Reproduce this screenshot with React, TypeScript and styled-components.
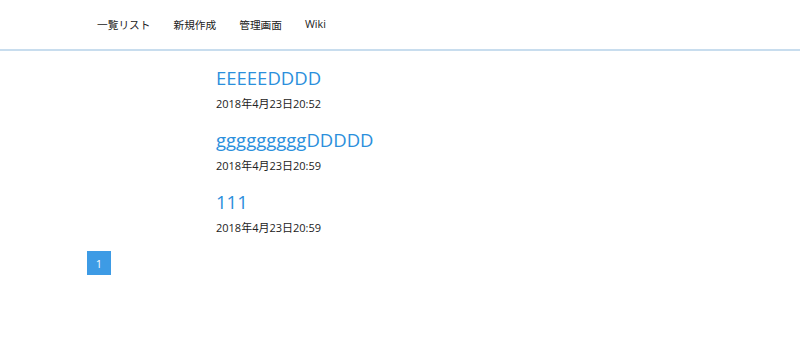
import React from "react";
import styled, { createGlobalStyle } from "styled-components";

const Global = createGlobalStyle`
  html, body { margin: 0; padding: 0; background: #fff; }
  body { font-family: "Open Sans", "Noto Sans CJK JP", sans-serif; color: #222; }
`;

const Header = styled.header`
  height: 49px;
  border-bottom: 2px solid #c8ddee;
  display: flex;
  align-items: center;
  padding-left: 97px;
`;

const Nav = styled.nav`
  display: flex;
  gap: 23px;
`;

const NavLink = styled.a`
  font-size: 10.7px;
  color: #222;
  text-decoration: none;
`;

const Main = styled.main`
  padding: 14px 0 0 87px;
`;

const List = styled.div`
  padding-left: 129px;
  display: flex;
  flex-direction: column;
`;

const Entry = styled.article`
  display: flex;
  flex-direction: column;
  margin-bottom: 15px;
`;

const Title = styled.a`
  font-size: 18.5px;
  line-height: 26px;
  color: #2b8fdc;
  text-decoration: none;
`;

const DateText = styled.div`
  font-size: 11px;
  line-height: 16px;
  margin-top: 5px;
  color: #222;
`;

const Pager = styled.div`
  display: flex;
`;

const PageBtn = styled.span`
  width: 24px;
  height: 24px;
  background: #3d9be5;
  color: #fff;
  font-size: 11px;
  display: flex;
  align-items: center;
  justify-content: center;
`;

const entries = [
  { title: "EEEEEDDDD", date: "2018年4月23日20:52" },
  { title: "gggggggggDDDDD", date: "2018年4月23日20:59" },
  { title: "111", date: "2018年4月23日20:59" },
];

export default function App() {
  return (
    <>
      <Global />
      <Header>
        <Nav>
          <NavLink href="#">一覧リスト</NavLink>
          <NavLink href="#">新規作成</NavLink>
          <NavLink href="#">管理画面</NavLink>
          <NavLink href="#">Wiki</NavLink>
        </Nav>
      </Header>
      <Main>
        <List>
          {entries.map((e, i) => (
            <Entry key={i}>
              <Title href="#">{e.title}</Title>
              <DateText>{e.date}</DateText>
            </Entry>
          ))}
        </List>
        <Pager>
          <PageBtn>1</PageBtn>
        </Pager>
      </Main>
    </>
  );
}
